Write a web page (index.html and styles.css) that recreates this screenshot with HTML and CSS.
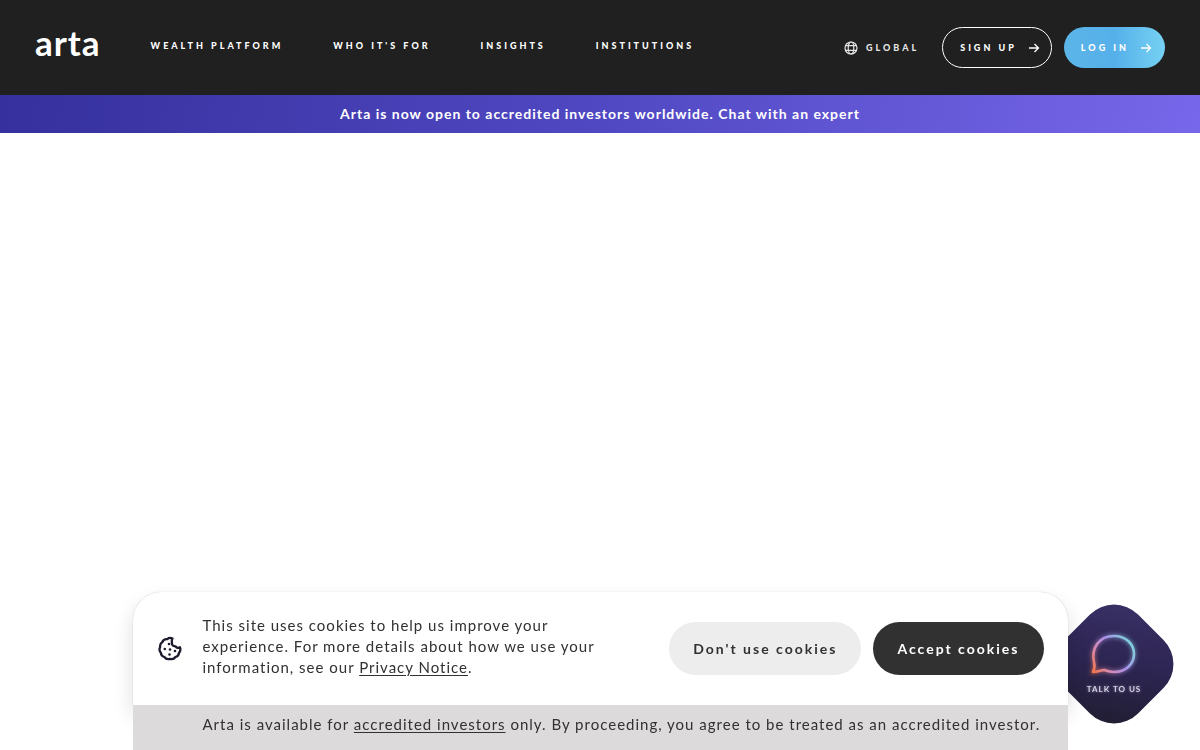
FILE: index.html
```
<!DOCTYPE html>
<html lang="en">
<head>
    <meta charset="utf-8">
    <meta name="viewport" content="width=device-width, initial-scale=1">
    <title>Arta</title>
    <link rel="stylesheet" href="styles.css">
</head>
<body>
    <header class="header">
        <a class="logo" href="#">arta</a>
        <nav class="nav">
            <a href="#">Wealth Platform</a>
            <a href="#">Who It's For</a>
            <a href="#">Insights</a>
            <a href="#">Institutions</a>
        </nav>
        <div class="header-actions">
            <button class="region-btn" type="button">
                <svg width="14" height="14" viewBox="0 0 14 14" fill="none" stroke="currentColor" stroke-width="1.2">
                    <circle cx="7" cy="7" r="6"/>
                    <ellipse cx="7" cy="7" rx="2.8" ry="6"/>
                    <path d="M1.6 4.7h10.8M1.6 9.3h10.8"/>
                </svg>
                Global
            </button>
            <a class="btn btn-outline" href="#">
                Sign up
                <svg width="12" height="12" viewBox="0 0 12 12" fill="none" stroke="currentColor" stroke-width="1.3">
                    <path d="M1 6h9.5M6.5 2l4 4-4 4"/>
                </svg>
            </a>
            <a class="btn btn-blue" href="#">
                Log in
                <svg width="12" height="12" viewBox="0 0 12 12" fill="none" stroke="currentColor" stroke-width="1.3">
                    <path d="M1 6h9.5M6.5 2l4 4-4 4"/>
                </svg>
            </a>
        </div>
    </header>

    <a class="banner" href="#">Arta is now open to accredited investors worldwide. Chat with an expert</a>

    <main></main>

    <button class="chat-btn" type="button">
        <svg width="56" height="50" viewBox="0 0 56 50" fill="none">
            <defs>
                <linearGradient id="bubble" x1="6" y1="40" x2="46" y2="14" gradientUnits="userSpaceOnUse">
                    <stop offset="0" stop-color="#f4754a"/>
                    <stop offset=".3" stop-color="#d78bb4"/>
                    <stop offset=".6" stop-color="#a98fe8"/>
                    <stop offset="1" stop-color="#7fd0dc"/>
                </linearGradient>
                <filter id="glow" x="-30%" y="-30%" width="160%" height="160%">
                    <feGaussianBlur stdDeviation="2"/>
                </filter>
            </defs>
            <path d="M7 42c2-4 2-6 1-10C5 18 13 6 28 6c12 0 20 8 20 18s-8 18-20 18c-4 0-7-1-10-2-3 0-7 2-11 2z" stroke="url(#bubble)" stroke-width="4" opacity=".6" filter="url(#glow)"/>
            <path d="M7 42c2-4 2-6 1-10C5 18 13 6 28 6c12 0 20 8 20 18s-8 18-20 18c-4 0-7-1-10-2-3 0-7 2-11 2z" stroke="url(#bubble)" stroke-width="2.6" stroke-linejoin="round"/>
        </svg>
        <span>Talk to us</span>
    </button>

    <div class="cookie-card">
        <div class="cookie-main">
            <svg class="cookie-icon" width="26" height="26" viewBox="0 0 26 26" fill="none" stroke="currentColor" stroke-width="2.3" stroke-linejoin="round">
                <path d="M15.500 2.500c-2-.9-4-.5-5.200.6-2.300-.2-4.200.9-4.900 2.900-1.800 1.200-2.600 3-2.200 5-1.100 2-.8 4.100.6 5.700.2 2.200 1.500 3.800 3.600 4.300 1.300 1.800 3.400 2.500 5.500 1.800 2.200.7 4.300 0 5.500-1.800 2.200-.5 3.500-2.100 3.700-4.300 1.300-1.500 1.600-3.600.8-5.400-1.500 1.100-3.500.7-4.300-1-2.600.2-4.200-1.700-3.600-4-.4-1.300-.2-2.700.5-3.800z"/>
                <g fill="currentColor" stroke="none">
                    <circle cx="12" cy="8" r="1.300"/>
                    <circle cx="7.800" cy="13" r="1.300"/>
                    <circle cx="13" cy="13.500" r="1.300"/>
                    <circle cx="18" cy="15" r="1.300"/>
                    <circle cx="12.500" cy="18.500" r="1.300"/>
                </g>
            </svg>
            <p class="cookie-text">This site uses cookies to help us improve your experience. For more details about how we use your information, see our <a href="#">Privacy Notice</a>.</p>
            <div class="cookie-buttons">
                <button class="decline-btn" type="button">Don't use cookies</button>
                <button class="accept-btn" type="button">Accept cookies</button>
            </div>
        </div>
        <p class="cookie-note">Arta is available for <a href="#">accredited investors</a> only. By proceeding, you agree to be treated as an accredited investor.</p>
    </div>
</body>
</html>
```
FILE: styles.css
```
* {
    box-sizing: border-box;
}
body {
    margin: 0;
    font-family: Lato, "Liberation Sans", sans-serif;
    color: #313131;
    background-color: #fff;
}
button {
    font-family: inherit;
    border: none;
    cursor: pointer;
}
.header {
    display: flex;
    align-items: center;
    padding: 27px 35px;
    background-color: #202020;
    color: #fff;
}
.header a {
    color: inherit;
    text-decoration: none;
}
.logo {
    margin-right: 50px;
    padding-bottom: 11px;
    font-size: 35px;
    line-height: 30px;
    font-weight: 700;
    letter-spacing: 1px;
}
.nav {
    display: flex;
    gap: 50px;
    padding-bottom: 4px;
}
.nav a,
.region-btn,
.btn {
    font-size: 9px;
    line-height: 15px;
    font-weight: 900;
    letter-spacing: 3px;
    text-transform: uppercase;
    white-space: nowrap;
}
.header-actions {
    display: flex;
    align-items: center;
    gap: 12px;
    margin-left: auto;
}
.region-btn {
    display: flex;
    align-items: center;
    gap: 8px;
    margin-right: 11px;
    padding: 0;
    background: none;
    color: #e4e4e4;
}
.btn {
    display: flex;
    align-items: center;
    gap: 11px;
    height: 41px;
    padding: 0 13px 0 17px;
    border-radius: 21px;
}
.btn-outline {
    padding: 0 11px 0 17px;
    border: 1px solid #fff;
}
.btn-blue {
    background: linear-gradient(90deg, #5cb5e8, #55b0ea 50%, #76d1f3);
}
.banner {
    display: block;
    padding: 9px 20px;
    background: linear-gradient(100deg, #35309d, #5048c2 50%, #7767ea);
    color: #fff;
    font-size: 14px;
    line-height: 20px;
    font-weight: 700;
    letter-spacing: 1px;
    text-align: center;
    text-decoration: none;
}

/* Cookie notice */
.cookie-card {
    position: fixed;
    bottom: 0;
    left: 0;
    right: 0;
    width: 90%;
    max-width: 935px;
    margin: 0 auto;
    font-size: 15px;
    letter-spacing: 1px;
}
.cookie-card p {
    margin: 0;
}
.cookie-card a {
    color: inherit;
    text-underline-offset: 2px;
}
.cookie-main {
    display: flex;
    align-items: center;
    padding: 23px 24px;
    border-radius: 28px 28px 0 0;
    background-color: #fff;
    box-shadow: 0 0 1px rgba(0,0,0,0.3), 0 10px 20px rgba(0,0,0,0.14);
}
.cookie-icon {
    flex: none;
    margin-right: 20px;
    color: #1c1a2b;
}
.cookie-main .cookie-text {
    max-width: 420px;
    padding-bottom: 4px;
    line-height: 21px;
}
.cookie-buttons {
    display: flex;
    gap: 12px;
    margin-left: auto;
}
.cookie-buttons button {
    height: 53px;
    padding: 0 24px;
    border-radius: 27px;
    font-size: 14px;
    font-weight: 700;
    letter-spacing: 2px;
    white-space: nowrap;
}
.cookie-buttons .decline-btn {
    background-color: #ededed;
    color: #313131;
}
.cookie-buttons .accept-btn {
    background-color: #313131;
    color: #fff;
}
.cookie-note {
    padding: 9px 20px 16px 70px;
    background-color: #dddadc;
    line-height: 20px;
}

/* Chat launcher */
.chat-btn {
    position: fixed;
    right: 26px;
    bottom: 26px;
    display: flex;
    flex-direction: column;
    align-items: center;
    justify-content: center;
    gap: 4px;
    width: 120px;
    height: 120px;
    padding: 0 0 5px;
    background: none;
    color: #d5d0e6;
}
.chat-btn::before {
    content: "";
    position: absolute;
    inset: 8px;
    z-index: -1;
    border-radius: 34px;
    background: linear-gradient(145deg, #3b3168, #2d2552 50%, #1f1c2c);
    transform: rotate(45deg);
}
.chat-btn span {
    font-size: 8px;
    line-height: 10px;
    font-weight: 700;
    letter-spacing: 1px;
    text-transform: uppercase;
    text-shadow: 0 0 3px rgba(213,208,230,0.6);
}
```
